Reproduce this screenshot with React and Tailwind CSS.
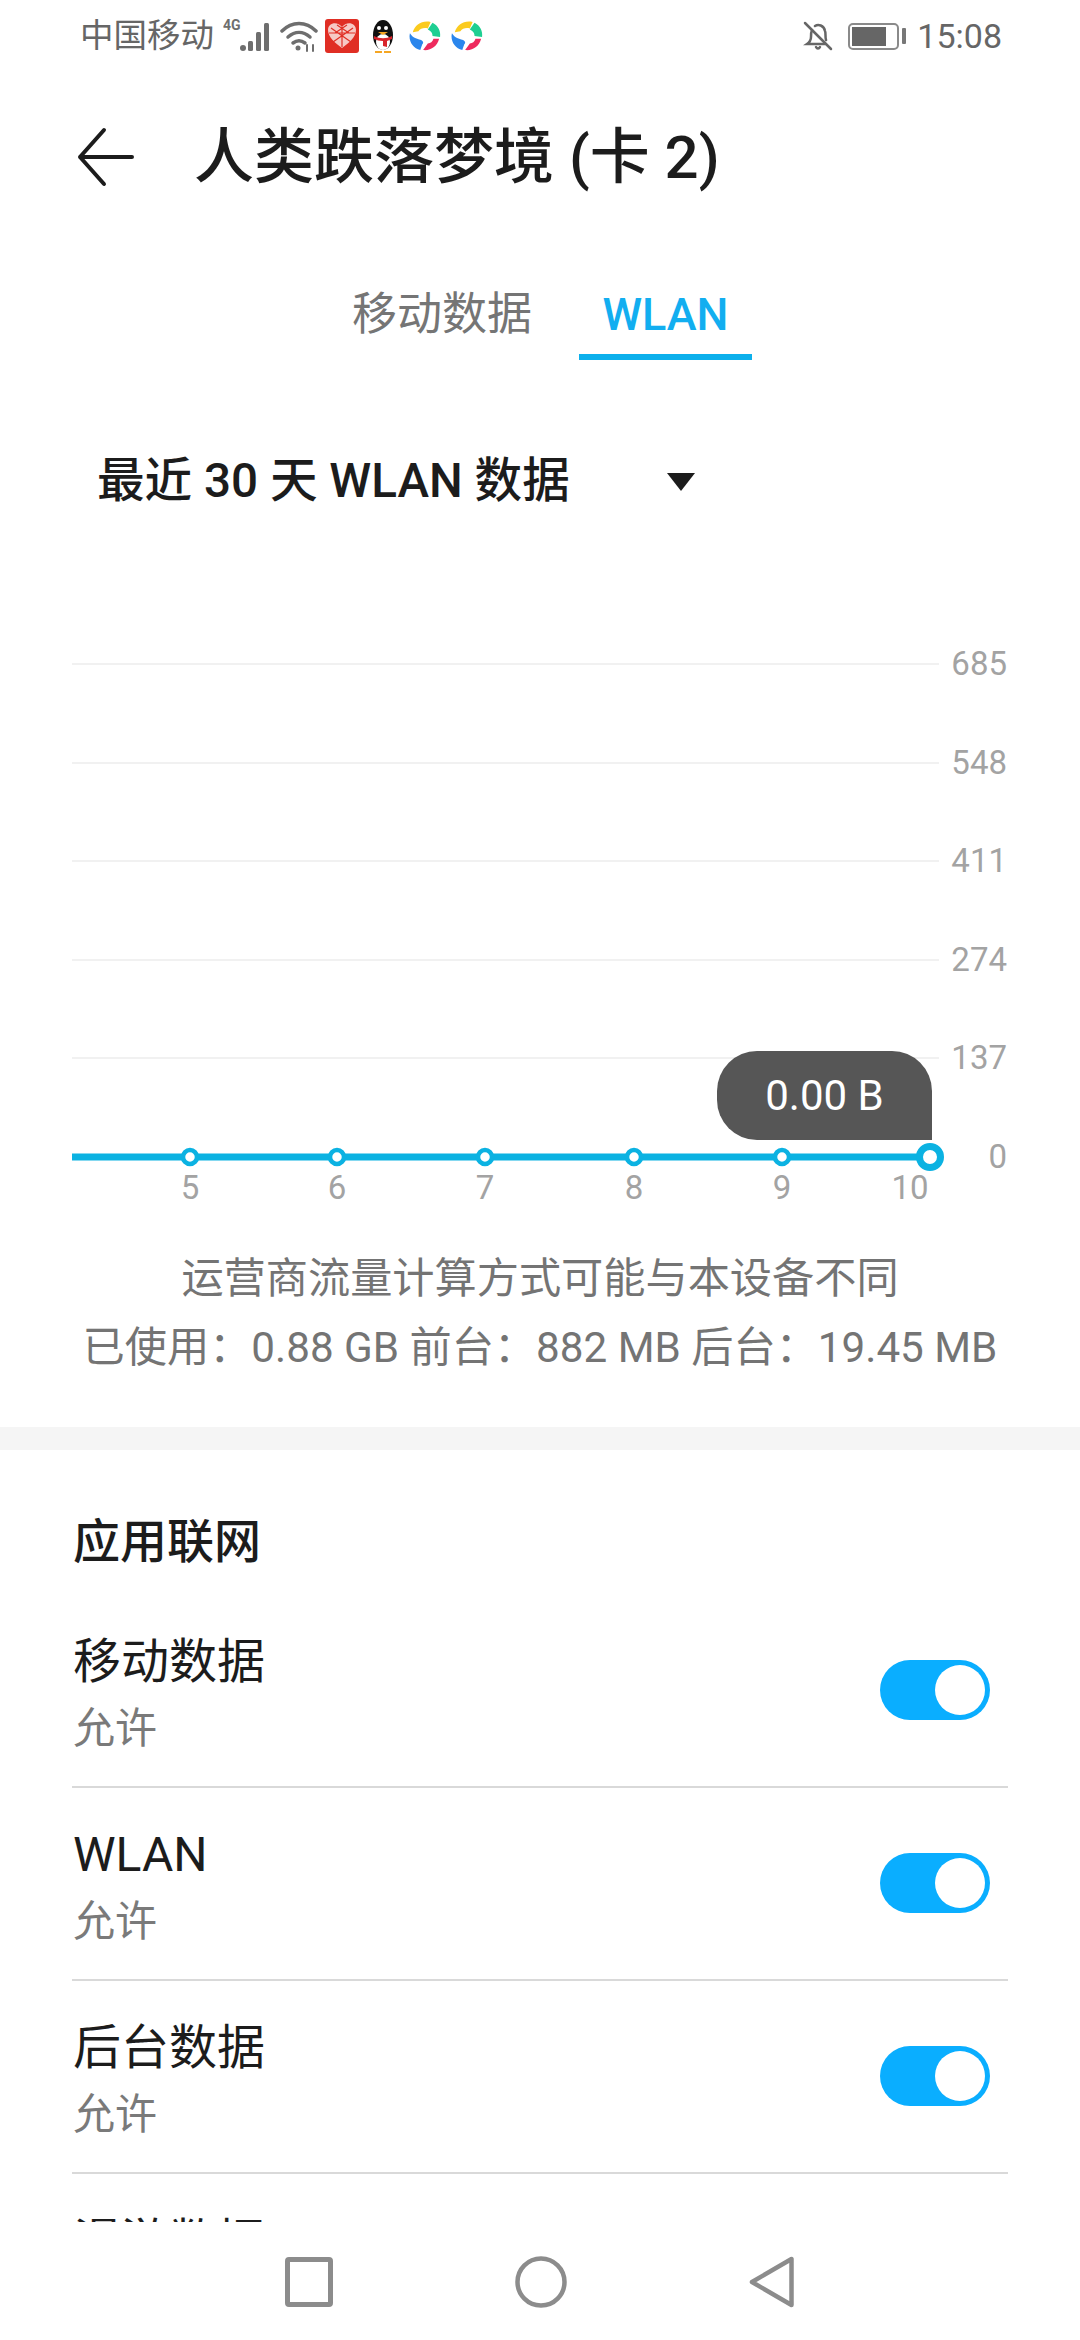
import React from 'react';

const FONT = "font-['Roboto','Noto_Sans_CJK_SC',sans-serif]";

const yTicks = ['685', '548', '411', '274', '137'];
const points = [
  { x: 118, label: '5' },
  { x: 265, label: '6' },
  { x: 413, label: '7' },
  { x: 562, label: '8' },
  { x: 710, label: '9' },
];

function SpinLogo() {
  return (
    <svg width="32" height="34" viewBox="0 0 34 34">
      <path d="M4 13C6 5 14 0 23 2l-3 7c-4-1-8 0-10 3z" fill="#fbcb1f" />
      <path d="M25 3c6 3 9 9 8 15l-8-1c0-3-1-5-5-7z" fill="#1fcf92" />
      <path d="M32 20c-2 8-9 13-17 12l5-7c3 0 5-2 6-5z" fill="#ee2a5e" />
      <path d="M12 32C4 30-1 22 1 14c3 5 8 6 11 7 3 1 4 3 2 5z" fill="#2b86ec" />
    </svg>
  );
}

function StatusBar() {
  return (
    <div className="h-[72px] flex items-center justify-between pl-[80px] pr-[78px] text-[#666666]">
      <div className="flex items-center">
        <span className="text-[33.5px] leading-none">中国移动</span>
        <svg className="ml-[9px]" width="48" height="36" viewBox="0 0 48 36" fill="#6e6e6e">
          <text x="0" y="12" fontSize="14" fontWeight="700" fontFamily="Roboto">4G</text>
          <circle cx="20" cy="30" r="3" />
          <rect x="25" y="23" width="5" height="10" rx="1.5" />
          <rect x="33" y="14" width="5" height="19" rx="1.5" />
          <rect x="41" y="5" width="5" height="28" rx="1.5" />
        </svg>
        <svg className="ml-[9px]" width="38" height="34" viewBox="0 0 38 34" fill="none" stroke="#6e6e6e" strokeWidth="3.5" strokeLinecap="round">
          <path d="M2 12c10-10 24-10 34 0" />
          <path d="M8 18c7-6 15-6 22 0" />
          <path d="M13 24c4-3 8-3 12 0" />
          <circle cx="18" cy="29" r="2.5" fill="#6e6e6e" stroke="none" />
          <path d="M27 26v6M33 26v6" strokeWidth="2" />
        </svg>
        <svg className="ml-[7px]" width="34" height="34" viewBox="0 0 34 34">
          <rect width="34" height="34" rx="3" fill="#e02e24" />
          <path d="M17 29C10 24 3 18 3 11c0-8 10-9 14-3 4-6 14-5 14 3 0 7-7 13-14 18z" fill="#f6c9c5" />
          <path d="M6 9l20 14M28 9L8 23M12 6l12 8M22 6L10 14M17 8v20M4 14h26" stroke="#e02e24" strokeWidth="1.2" />
        </svg>
        <svg className="ml-[10px]" width="28" height="34" viewBox="0 0 28 34">
          <ellipse cx="14" cy="16" rx="10" ry="15" fill="#111111" />
          <ellipse cx="14" cy="23" rx="7" ry="8" fill="#ffffff" />
          <circle cx="10" cy="9" r="2" fill="#ffffff" />
          <circle cx="17" cy="9" r="2" fill="#ffffff" />
          <path d="M9 13h10l-5 3z" fill="#f5a623" />
          <path d="M5 17c6 3 12 3 18 0v3c-2 1-3 1-5 2v6l-4-1v-5c-4 0-6-1-9-2z" fill="#d8232a" />
          <path d="M6 32h7v2H6zM15 32h7v2h-7z" fill="#f5a623" />
        </svg>
        <div className="ml-[12px] flex gap-[10px]">
          <SpinLogo />
          <SpinLogo />
        </div>
      </div>
      <div className="flex items-center">
        <svg width="30" height="30" viewBox="0 0 30 30" fill="none" stroke="#666666" strokeWidth="2.5" strokeLinecap="round">
          <path d="M2 2l26 26" />
          <path d="M9 9c-1 2-1 4-1 7 0 3-1 5-4 7h18M12 5c3-2 9-1 10 5 1 2 0 6 1 9" />
          <path d="M13 26c1 2 3 2 4 0" />
        </svg>
        <div className="ml-[15px] w-[51px] h-[27px] border-2 border-[#8a8a8a] rounded-[5px] p-[2px]">
          <div className="w-[34px] h-full bg-[#666666]" />
        </div>
        <div className="ml-[3px] w-[4px] h-[16px] bg-[#777777] rounded-[1px]" />
        <span className="ml-[11px] text-[34px] leading-none">15:08</span>
      </div>
    </div>
  );
}

function Toggle() {
  return (
    <div className="w-[110px] h-[60px] rounded-full bg-[#0aaeff] flex items-center justify-end pr-[5px]">
      <div className="w-[50px] h-[50px] rounded-full bg-white" />
    </div>
  );
}

function SwitchRow({ title, last }) {
  return (
    <div className={`h-[193px] flex items-center justify-between pr-[18px] ${last ? '' : 'border-b-2 border-[#d9d9d9]'}`}>
      <div className="pl-[1px] pt-[10px]">
        <div className="text-[48px] leading-[67px] text-[#1c1c1c]">{title}</div>
        <div className="text-[42px] leading-[67px] text-[#7a7a7a]">允许</div>
      </div>
      <Toggle />
    </div>
  );
}

function Chart() {
  return (
    <div className="relative mt-[150px] ml-[72px] mr-[73px]">
      {yTicks.map((t) => (
        <div key={t} className="h-[98.6px] flex items-start">
          <div className="flex-1 h-[2px] bg-[#f1f1f1] mt-[-1px]" />
          <span className="w-[68px] mt-[-24px] text-right text-[33px] leading-[48px] text-[#a3a3a3]">{t}</span>
        </div>
      ))}
      <div className="h-[60px] flex items-start">
        <div className="flex-1" />
        <span className="w-[68px] mt-[-24px] text-right text-[33px] leading-[48px] text-[#a3a3a3]">0</span>
      </div>

      <svg className="absolute left-0 top-[468px]" width="880" height="40" viewBox="0 0 880 40">
        <line x1="0" y1="25" x2="858" y2="25" stroke="#0bb2e2" strokeWidth="7" />
        {points.map((p) => (
          <circle key={p.x} cx={p.x} cy="25" r="7" fill="#ffffff" stroke="#0bb2e2" strokeWidth="4.5" />
        ))}
        <circle cx="858" cy="25" r="10.5" fill="#ffffff" stroke="#0bb2e2" strokeWidth="7" />
      </svg>
      <div className="absolute left-[645px] top-[387px] w-[215px] h-[89px] bg-[#565656] rounded-[40px] rounded-br-none flex items-center justify-center text-[42px] text-white">
        0.00 B
      </div>
      <div className="absolute left-0 top-[500px] w-full h-[48px] text-[33px] leading-[48px] text-[#a3a3a3]">
        {points.map((p) => (
          <span key={p.label} className="absolute w-[60px] text-center -translate-x-1/2" style={{ left: p.x }}>{p.label}</span>
        ))}
        <span className="absolute w-[60px] text-center -translate-x-1/2" style={{ left: 838 }}>10</span>
      </div>
    </div>
  );
}

export default function App() {
  return (
    <div className={`relative w-[1080px] h-[2340px] bg-white overflow-hidden ${FONT}`}>
      <StatusBar />

      <div className="h-[170px] flex items-center pl-[76px]">
        <svg width="60" height="60" viewBox="0 0 60 60" fill="none" stroke="#1c1c1c" strokeWidth="4" strokeLinecap="round" strokeLinejoin="round">
          <path d="M56 30H4M28 3L4 30l24 27" />
        </svg>
        <span className="ml-[58px] mt-[2px] text-[60px] font-medium text-[#1c1c1c] leading-none">人类跌落梦境 (卡 2)</span>
      </div>

      <div className="h-[118px] flex pl-[352px] whitespace-nowrap">
        <div className="w-[227px] pt-[42px]">
          <span className="text-[45px] leading-[62px] text-[#757575]">移动数据</span>
        </div>
        <div className="w-[173px] h-[118px] flex items-start justify-center pt-[42px] border-b-[6px] border-[#0db0ec]">
          <span className="text-[45px] leading-[62px] font-medium text-[#12aef0]">WLAN</span>
        </div>
      </div>

      <div className="mt-[90px] h-[64px] flex items-center pl-[97px]">
        <span className="text-[47.6px] font-medium text-[#1c1c1c] leading-none">最近 30 天 WLAN 数据</span>
        <div className="ml-[97px] w-0 h-0 border-l-[14px] border-r-[14px] border-t-[18px] border-l-transparent border-r-transparent border-t-[#1c1c1c]" />
      </div>

      <Chart />

      <div className="flex flex-col items-center text-[42.2px] leading-[69px] text-[#747474] mt-[27px]">
        <div>运营商流量计算方式可能与本设备不同</div>
        <div>已使用：0.88 GB 前台：882 MB 后台：19.45 MB</div>
      </div>

      <div className="mt-[45px] h-[23px] bg-[#f5f5f5]" />

      <div className="mt-[59px] pl-[73px] text-[47px] font-medium leading-[66px] text-[#1c1c1c]">应用联网</div>

      <div className="mx-[72px] mt-[20px]">
        <SwitchRow title="移动数据" />
        <SwitchRow title="WLAN" />
        <SwitchRow title="后台数据" />
        <SwitchRow title="漫游数据" last />
      </div>

      <div className="absolute left-0 bottom-0 w-full h-[118px] bg-white flex items-center justify-center">
        <div className="flex items-center gap-[182px] mt-[2px]">
          <svg width="48" height="50" viewBox="0 0 48 50" fill="none" stroke="#8c8c8c" strokeWidth="5" strokeLinejoin="round">
            <rect x="2.5" y="2.5" width="43" height="45" rx="1.5" />
          </svg>
          <svg width="52" height="52" viewBox="0 0 52 52" fill="none" stroke="#8c8c8c" strokeWidth="4.5">
            <circle cx="26" cy="26" r="23.5" />
          </svg>
          <svg width="46" height="52" viewBox="0 0 46 52" fill="none" stroke="#8c8c8c" strokeWidth="4.5" strokeLinejoin="round">
            <path d="M42.5 3v46L3 26z" />
          </svg>
        </div>
      </div>
    </div>
  );
}
